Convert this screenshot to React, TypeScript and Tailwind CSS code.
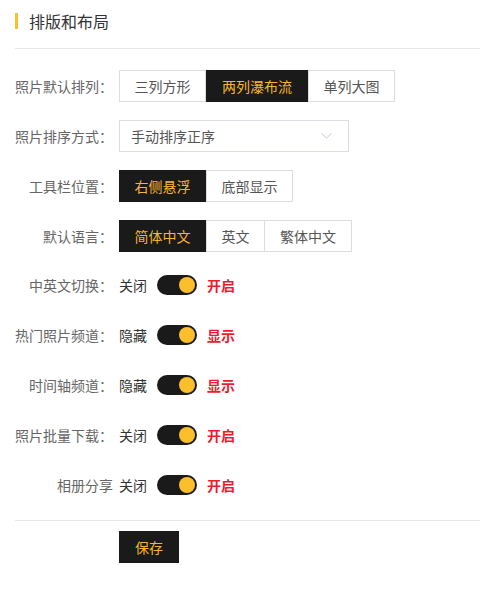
const font = { fontFamily: '"Noto Sans CJK SC", "Noto Sans", sans-serif' };

function Segmented({ items, active }: { items: { label: string; w: string }[]; active: number }) {
  return (
    <div className="flex h-8">
      {items.map((it, i) => (
        <div
          key={it.label}
          className={
            "flex items-center justify-center text-[14px] " +
            it.w +
            (i === active
              ? " bg-[#1a1a1a] text-[#f8b62d]"
              : " border-y border-r border-[#dcdde2] text-[#555] bg-white" + (i === 0 || i - 1 === active ? " border-l" : ""))
          }
        >
          {it.label}
        </div>
      ))}
    </div>
  );
}

function Row({ label, children }: { label: string; children: React.ReactNode }) {
  return (
    <div className="flex items-center">
      <div className="w-[119px] pr-[6px] text-right text-[14px] leading-5 text-[#666] whitespace-nowrap">{label}</div>
      {children}
    </div>
  );
}

function Toggle({ label, off, on }: { label: string; off: string; on: string }) {
  return (
    <Row label={label}>
      <div className="flex items-center h-5">
        <span className="text-[14px] leading-5 text-[#333]">{off}</span>
        <div className="ml-[10px] w-10 h-5 rounded-full bg-[#1a1a1a] flex items-center justify-end pr-[2px]">
          <div className="w-4 h-4 rounded-full bg-[#fbbf2c]" />
        </div>
        <span className="ml-[10px] text-[14px] leading-5 font-bold text-[#f0192d]">{on}</span>
      </div>
    </Row>
  );
}

export default function App() {
  return (
    <div className="w-[480px] h-[607px] bg-white pl-[15px]" style={font}>
      <div className="flex items-center h-[49px] border-b border-[#e8e8ec]">
        <div className="w-[3px] h-4 bg-[#fbbf2c] -mt-[6px]" />
        <div className="ml-[11px] text-[16px] text-[#333] -mt-[6px]">排版和布局</div>
      </div>

      <div className="-ml-[15px] pt-[21px] flex flex-col gap-[18px]">
        <Row label="照片默认排列：">
          <Segmented
            active={1}
            items={[
              { label: "三列方形", w: "w-[87px]" },
              { label: "两列瀑布流", w: "w-[102px]" },
              { label: "单列大图", w: "w-[87px]" },
            ]}
          />
        </Row>
        <Row label="照片排序方式：">
          <div className="w-[230px] h-8 border border-[#dcdde2] flex items-center justify-between pl-[11px] pr-[16px]">
            <span className="text-[14px] text-[#555]">手动排序正序</span>
            <svg width="11" height="6" viewBox="0 0 11 6" fill="none" stroke="#c8c9cc" strokeWidth="1">
              <path d="M0.5 0.5 L5.5 5 L10.5 0.5" />
            </svg>
          </div>
        </Row>
        <Row label="工具栏位置：">
          <Segmented
            active={0}
            items={[
              { label: "右侧悬浮", w: "w-[87px]" },
              { label: "底部显示", w: "w-[87px]" },
            ]}
          />
        </Row>
        <Row label="默认语言：">
          <Segmented
            active={0}
            items={[
              { label: "简体中文", w: "w-[87px]" },
              { label: "英文", w: "w-[59px]" },
              { label: "繁体中文", w: "w-[87px]" },
            ]}
          />
        </Row>
        <div className="pt-[5px] flex flex-col gap-[30px]">
          <Toggle label="中英文切换：" off="关闭" on="开启" />
          <Toggle label="热门照片频道：" off="隐藏" on="显示" />
          <Toggle label="时间轴频道：" off="隐藏" on="显示" />
          <Toggle label="照片批量下载：" off="关闭" on="开启" />
          <Toggle label="相册分享" off="关闭" on="开启" />
        </div>
      </div>

      <div className="mt-[25px] border-t border-[#e8e8ec] pt-[10px] pl-[104px]">
        <div className="w-[60px] h-8 bg-[#1a1a1a] text-[#f8b62d] text-[14px] flex items-center justify-center">保存</div>
      </div>
    </div>
  );
}
